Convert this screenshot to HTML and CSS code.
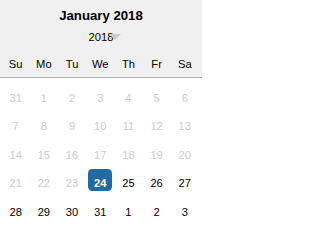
FILE: index.html
```html
<!DOCTYPE html>
<html>
<head>
<meta charset="utf-8">
<link rel="stylesheet" href="styles.css">
</head>
<body>
<div class="picker">
  <div class="header">
    <div class="month-title">January 2018</div>
    <div class="year-row"><span class="year">2018<span class="arrow"></span></span></div>
    <div class="grid day-names">
      <div>Su</div><div>Mo</div><div>Tu</div><div>We</div><div>Th</div><div>Fr</div><div>Sa</div>
    </div>
  </div>
  <div class="grid days">
    <div class="day off">31</div><div class="day off">1</div><div class="day off">2</div><div class="day off">3</div><div class="day off">4</div><div class="day off">5</div><div class="day off">6</div>
    <div class="day off">7</div><div class="day off">8</div><div class="day off">9</div><div class="day off">10</div><div class="day off">11</div><div class="day off">12</div><div class="day off">13</div>
    <div class="day off">14</div><div class="day off">15</div><div class="day off">16</div><div class="day off">17</div><div class="day off">18</div><div class="day off">19</div><div class="day off">20</div>
    <div class="day off">21</div><div class="day off">22</div><div class="day off">23</div><div class="day selected">24</div><div class="day">25</div><div class="day">26</div><div class="day">27</div>
    <div class="day">28</div><div class="day">29</div><div class="day">30</div><div class="day">31</div><div class="day">1</div><div class="day">2</div><div class="day">3</div>
  </div>
</div>
</body>
</html>
```
FILE: styles.css
```css
html, body {
  margin: 0;
  padding: 0;
  background: #ffffff;
}
.picker {
  width: 202px;
  font-family: "Liberation Sans", Arial, sans-serif;
  font-size: 11.2px;
  color: #000;
}
.header {
  background: #f0f0f0;
  border-bottom: 1px solid #aeaeae;
  padding-top: 8px;
  padding-bottom: 5.2px;
  text-align: center;
}
.month-title {
  font-weight: bold;
  font-size: 13.2px;
  line-height: 16px;
}
.year-row {
  margin-top: 4.6px;
  line-height: 16px;
}
.year {
  position: relative;
  display: inline-block;
}
.arrow {
  position: absolute;
  left: 20.5px;
  top: 5px;
  width: 0;
  height: 0;
  border-left: 6px solid transparent;
  border-right: 6px solid transparent;
  border-top: 6px solid #cccccc;
}
.grid {
  display: grid;
  grid-template-columns: repeat(7, 24px);
  column-gap: 4.2px;
  padding-left: 3.7px;
}
.day-names {
  margin-top: 11.2px;
  line-height: 16px;
}
.days {
  padding-top: 6px;
  row-gap: 6.5px;
}
.day {
  height: 22px;
  box-sizing: border-box;
  padding-top: 6px;
  line-height: 16px;
  text-align: center;
}
.day.off {
  color: #cccccc;
}
.day.selected {
  background: #216ba5;
  color: #ffffff;
  font-weight: bold;
  border-radius: 4.2px;
}
```
